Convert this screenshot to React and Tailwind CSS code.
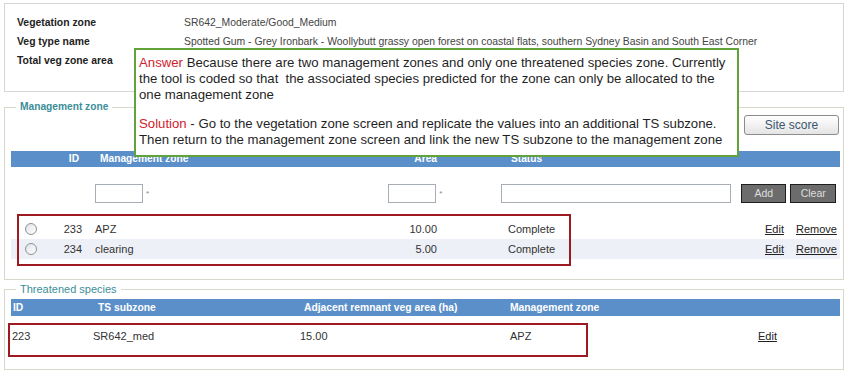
import React from "react";

function Radio() {
  return (
    <span className="block w-[12px] h-[12px] rounded-full border border-[#8d9296] bg-gradient-to-br from-[#dfe2e4] to-white" />
  );
}

export default function App() {
  return (
    <div className="relative w-[850px] h-[371px] overflow-hidden bg-white text-[11px] text-[#333] font-['Liberation_Sans',Arial,sans-serif]">
      {/* Top summary panel */}
      <div className="ml-[4px] mt-[3px] w-[840px] h-[89px] border border-[#d8d8d2] pl-[12px] pt-[9px]">
        <div className="grid grid-cols-[167px_1fr] text-[10.4px]">
          <div className="h-[19px] leading-[19px] font-bold text-[#222]">Vegetation zone</div>
          <div className="h-[19px] leading-[19px] text-[#444]">SR642_Moderate/Good_Medium</div>
          <div className="h-[19px] leading-[19px] font-bold text-[#222]">Veg type name</div>
          <div className="h-[19px] leading-[19px] text-[#444] whitespace-nowrap">
            Spotted Gum - Grey Ironbark - Woollybutt grassy open forest on coastal flats, southern Sydney Basin and South East Corner
          </div>
          <div className="h-[19px] leading-[19px] font-bold text-[#222]">Total veg zone area</div>
          <div className="h-[19px]" />
        </div>
      </div>

      {/* Management zone fieldset */}
      <fieldset className="ml-[4px] mt-[8px] w-[840px] h-[180px] border border-[#d8d8cc] px-0 pb-0">
        <legend className="ml-[11px] px-[4px] h-[14px] leading-[14px] text-[10.2px] font-bold text-[#3b8e99]">
          Management zone
        </legend>
        <div className="flex justify-end pr-[4px] mt-[1px]">
          <button className="w-[95px] h-[20px] rounded-[3px] border border-[#8c8c8c] bg-gradient-to-b from-white to-[#e4e4e4] text-[12px] leading-[18px] text-[#3a566f]">
            Site score
          </button>
        </div>
        {/* header bar */}
        <div className="ml-[6px] mt-[16px] w-[829px] h-[16px] bg-[#5b8fc9] flex items-center font-bold text-white text-[10.2px] leading-[16px]">
          <div className="w-[49px]" />
          <div className="w-[22px] text-right pr-[3px]">ID</div>
          <div className="w-[306px] pl-[18px]">Management zone</div>
          <div className="w-[49px] text-right">Area</div>
          <div className="pl-[74px]">Status</div>
        </div>
        {/* input row */}
        <div className="ml-[6px] mt-[17px] flex items-center h-[19px]">
          <div className="w-[84px]" />
          <input className="w-[48px] h-[19px] border border-[#a7adb4] bg-white" />
          <span className="ml-[3px] text-[8px] text-[#888]">*</span>
          <div className="w-[239px]" />
          <input className="w-[48px] h-[19px] border border-[#a7adb4] bg-white" />
          <span className="ml-[3px] text-[8px] text-[#888]">*</span>
          <div className="w-[59px]" />
          <input className="w-[230px] h-[19px] border border-[#a7adb4] bg-white" />
          <button className="ml-[10px] w-[45px] h-[19px] bg-[#6c6c6c] border border-[#1e1e1e] text-[10.5px] text-[#dedede] leading-[17px]">
            Add
          </button>
          <button className="ml-[4px] w-[46px] h-[19px] bg-[#6c6c6c] border border-[#1e1e1e] text-[10.5px] text-[#dedede] leading-[17px]">
            Clear
          </button>
        </div>
        {/* rows */}
        <div className="ml-[6px] mt-[16px] w-[829px]">
          {[
            { id: "233", name: "APZ", area: "10.00", alt: false },
            { id: "234", name: "clearing", area: "5.00", alt: true },
          ].map((r) => (
            <div
              key={r.id}
              className={`flex items-center h-[20px] leading-[20px] ${r.alt ? "bg-[#edf0f7]" : ""}`}
            >
              <div className="w-[49px] pl-[14px] flex items-center">
                <Radio />
              </div>
              <div className="w-[22px] text-right">{r.id}</div>
              <div className="w-[306px] pl-[13px]">{r.name}</div>
              <div className="w-[49px] text-right">{r.area}</div>
              <div className="w-[328px] pl-[71px]">Complete</div>
              <a className="underline text-[#222]">Edit</a>
              <a className="ml-[12px] underline text-[#222]">Remove</a>
            </div>
          ))}
        </div>
      </fieldset>

      {/* Threatened species fieldset */}
      <fieldset className="ml-[4px] mt-[2px] w-[840px] h-[88px] border border-[#d8d8cc] px-0 pb-0">
        <legend className="ml-[11px] px-[4px] h-[14px] leading-[14px] text-[11px] text-[#3b8e99]">
          Threatened species
        </legend>
        <div className="ml-[6px] mt-[3px] w-[829px] h-[17px] bg-[#5b8fc9] flex items-center font-bold text-white text-[10.3px] leading-[17px]">
          <div className="w-[82px] pl-[2px]">ID</div>
          <div className="w-[207px] pl-[5px]">TS subzone</div>
          <div className="w-[210px] pl-[4px]">Adjacent remnant veg area (ha)</div>
          <div>Management zone</div>
        </div>
        <div className="ml-[6px] mt-[3px] w-[829px] h-[34px] flex items-center">
          <div className="w-[82px] pl-[1px]">223</div>
          <div className="w-[207px]">SR642_med</div>
          <div className="w-[210px]">15.00</div>
          <div className="w-[248px]">APZ</div>
          <a className="underline text-[#222]">Edit</a>
        </div>
      </fieldset>

      {/* Annotation: red highlight boxes */}
      <div className="absolute left-[17px] top-[214px] w-[554px] h-[52px] border-2 border-[#9d1b20]" />
      <div className="absolute left-[8px] top-[323px] w-[580px] h-[34px] border-2 border-[#9d1b20]" />

      {/* Annotation: green answer box */}
      <div className="absolute left-[134px] top-[48px] w-[605px] h-[109px] border-2 border-[#62a23a] bg-white pl-[3px] pt-[5px] text-[13.2px] leading-[16px] text-[#1f1f1f] whitespace-nowrap">
        <div>
          <span className="text-[#d0222d]">Answer</span> Because there are two management zones and only one threatened species zone. Currently
          <br />
          <span className="whitespace-pre">the tool is coded so that  the associated species predicted for the zone can only be allocated to the</span>
          <br />
          one management zone
        </div>
        <div className="mt-[13px]">
          <span className="text-[#d0222d]">Solution</span> - Go to the vegetation zone screen and replicate the values into an additional TS subzone.
          <br />
          Then return to the management zone screen and link the new TS subzone to the management zone
        </div>
      </div>
    </div>
  );
}
